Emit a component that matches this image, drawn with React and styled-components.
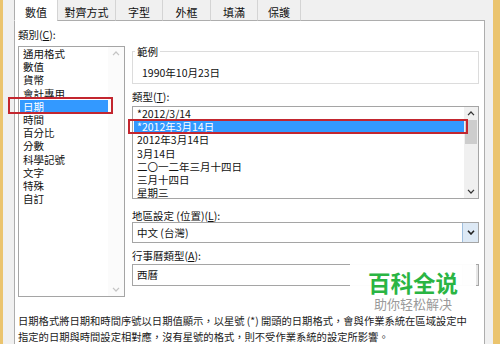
import React from "react";
import styled, { createGlobalStyle } from "styled-components";

const GlobalStyle = createGlobalStyle`
  html, body {
    margin: 0;
    padding: 0;
    background: #f0f0f0;
  }
`;

const categories = [
  "通用格式",
  "數值",
  "貨幣",
  "會計專用",
  "日期",
  "時間",
  "百分比",
  "分數",
  "科學記號",
  "文字",
  "特殊",
  "自訂",
];

const types = [
  "*2012/3/14",
  "*2012年3月14日",
  "2012年3月14日",
  "3月14日",
  "二〇一二年三月十四日",
  "三月十四日",
  "星期三",
];

const tabs = [
  { label: "數值", width: 44 },
  { label: "對齊方式", width: 59 },
  { label: "字型", width: 48 },
  { label: "外框", width: 49 },
  { label: "填滿", width: 48 },
  { label: "保護", width: 44 },
];

function Chevron({ up, color = "#555", stroke = 1.2 }) {
  return (
    <svg width="8" height="5" viewBox="0 0 8 5">
      <polyline
        points={up ? "1,4.2 4,1 7,4.2" : "1,0.8 4,4 7,0.8"}
        fill="none"
        stroke={color}
        strokeWidth={stroke}
      />
    </svg>
  );
}

function App() {
  return (
    <>
      <GlobalStyle />
      <Screen>
        <Strip $w={3} />
        <Dialog>
          <TabRow>
            {tabs.map((t, i) => (
              <Tab key={t.label} $w={t.width} $active={i === 0}>
                {t.label}
              </Tab>
            ))}
          </TabRow>
          <Panel>
            <Body>
              <Column>
                <Label>
                  類別(<u>C</u>):
                </Label>
                <CategoryList>
                  <Items>
                    {categories.map((c) => (
                      <Item key={c} $selected={c === "日期"}>
                        {c}
                        {c === "日期" && <RedMark $l={-12} $r={-5} $t={-3} $b={-1} />}
                      </Item>
                    ))}
                  </Items>
                  <ScrollBar $disabled>
                    <Chevron up color="#c4c4c4" />
                    <Track />
                    <Chevron color="#c4c4c4" />
                  </ScrollBar>
                </CategoryList>
              </Column>
              <Column>
                <GroupBox>
                  <legend>範例</legend>
                  <SampleValue>1990年10月23日</SampleValue>
                </GroupBox>
                <Label $mt={5.5}>
                  類型(<u>T</u>):
                </Label>
                <TypeList>
                  <Items>
                    {types.map((t, i) => (
                      <Item key={t} $selected={i === 1} $pl={3}>
                        {t}
                        {i === 1 && <RedMark $l={-6} $r={-4} $t={-1.5} $b={-1} />}
                      </Item>
                    ))}
                  </Items>
                  <ScrollBar>
                    <Chevron up color="#333" />
                    <Track>
                      <Thumb />
                    </Track>
                    <Chevron color="#333" />
                  </ScrollBar>
                </TypeList>
                <Label $mt={9.5}>
                  地區設定 (位置)(<u>L</u>):
                </Label>
                <Select $mt={0.5}>
                  <SelectText>中文 (台灣)</SelectText>
                  <DropButton>
                    <Chevron color="#222" stroke={1.6} />
                  </DropButton>
                </Select>
                <Label $mt={6}>
                  行事曆類型(<u>A</u>):
                </Label>
                <Select $mt={1.5} $h={22}>
                  <SelectText>西曆</SelectText>
                  <DropButton $plain />
                </Select>
              </Column>
            </Body>
            <Description>
              <span>日期格式將日期和時間序號以日期值顯示，以星號 (*) 開頭的日期格式，會與作業系統在區域設定中</span>
              <span>指定的日期與時間設定相對應，沒有星號的格式，則不受作業系統的設定所影響。</span>
            </Description>
            <Watermark>
              <strong>百科全说</strong>
              <small>助你轻松解决</small>
            </Watermark>
          </Panel>
        </Dialog>
        <Strip $w={7} />
      </Screen>
    </>
  );
}

const Screen = styled.div`
  width: 500px;
  height: 344px;
  display: flex;
  overflow: hidden;
  background: #f0f0f0;
  font-family: "Noto Sans CJK TC", "Noto Sans", sans-serif;
  font-size: 10.5px;
  color: #111;
`;

const Strip = styled.div`
  flex: none;
  width: ${(p) => p.$w}px;
  background: #ebc46e;
`;

const Dialog = styled.div`
  flex: 1;
  min-width: 0;
  display: flex;
  flex-direction: column;
  padding: 0 8px 0 11px;
`;

const TabRow = styled.div`
  display: flex;
  height: 21px;
  margin-bottom: -1px;
  position: relative;
  z-index: 1;
`;

const Tab = styled.div`
  width: ${(p) => p.$w}px;
  margin-left: ${(p) => (p.$active ? 0 : -1)}px;
  display: flex;
  align-items: center;
  justify-content: center;
  border: 1px solid ${(p) => (p.$active ? "#adadad" : "#d4d4d4")};
  border-top: none;
  border-bottom: ${(p) => (p.$active ? "1px solid #fff" : "1px solid #adadad")};
  background: ${(p) => (p.$active ? "#fff" : "#f0f0f0")};
  font-size: 11px;
  padding-top: 3px;
  box-sizing: border-box;
  &:first-child {
    margin-left: 0;
  }
`;

const Panel = styled.div`
  position: relative;
  flex: 1;
  background: #fff;
  border: 1px solid #adadad;
  border-bottom: none;
  padding: 7px 5px 0 3px;
`;

const Body = styled.div`
  display: grid;
  grid-template-columns: 107px 347px;
  column-gap: 7px;
  align-items: start;
`;

const Column = styled.div`
  display: flex;
  flex-direction: column;
`;

const Label = styled.div`
  line-height: 13px;
  height: 13px;
  margin-top: ${(p) => p.$mt || 0}px;
  white-space: nowrap;
  u {
    text-decoration: underline;
  }
`;

const ListBox = styled.div`
  display: flex;
  border: 1px solid #a5a5a5;
  background: #fff;
  box-sizing: border-box;
`;

const CategoryList = styled(ListBox)`
  margin-top: 5px;
  height: 251px;
`;

const TypeList = styled(ListBox)`
  margin-top: 3.5px;
  height: 93px;
`;

const Items = styled.div`
  flex: 1;
  min-width: 0;
  display: flex;
  flex-direction: column;
`;

const Item = styled.div`
  position: relative;
  height: 13.2px;
  line-height: 13.2px;
  padding-left: ${(p) => p.$pl ?? 3}px;
  margin-left: 1px;
  white-space: nowrap;
  background: ${(p) => (p.$selected ? "#3399ff" : "transparent")};
  color: ${(p) => (p.$selected ? "#fff" : "#111")};
`;

const RedMark = styled.div`
  position: absolute;
  left: ${(p) => p.$l}px;
  right: ${(p) => p.$r}px;
  top: ${(p) => p.$t}px;
  bottom: ${(p) => p.$b}px;
  border: 2px solid #c3262f;
  pointer-events: none;
`;

const ScrollBar = styled.div`
  flex: none;
  width: ${(p) => (p.$disabled ? 16 : 14)}px;
  display: flex;
  flex-direction: column;
  align-items: center;
  padding: 4px 0;
  gap: 3px;
  background: ${(p) => (p.$disabled ? "#fbfbfb" : "#f0f0f0")};
`;

const Track = styled.div`
  flex: 1;
  align-self: stretch;
  padding-top: 1px;
`;

const Thumb = styled.div`
  height: 24px;
  margin: 0 1px;
  background: #cdcdcd;
`;

const GroupBox = styled.fieldset`
  margin: 17px 0 0;
  padding: 8px 8px 4px;
  min-width: 0;
  border: 1px solid #dcdcdc;
  legend {
    padding: 0 2px;
    margin-left: -6px;
    line-height: 13px;
  }
`;

const SampleValue = styled.div`
  line-height: 13px;
  padding-left: 1px;
`;

const Select = styled.div`
  display: flex;
  height: ${(p) => p.$h || 21}px;
  margin-top: ${(p) => p.$mt || 0}px;
  border: 1px solid #a5a5a5;
  box-sizing: border-box;
  background: #fff;
`;

const SelectText = styled.div`
  flex: 1;
  display: flex;
  align-items: center;
  padding-left: 4px;
`;

const DropButton = styled.div`
  width: 15px;
  display: flex;
  align-items: center;
  justify-content: center;
  background: ${(p) => (p.$plain ? "#e6e6e6" : "#dde9f5")};
  border-left: 1px solid ${(p) => (p.$plain ? "#bdbdbd" : "#9fbfdf")};
`;

const Description = styled.div`
  display: flex;
  flex-direction: column;
  margin-top: 16px;
  font-size: 10.3px;
  line-height: 15.5px;
  white-space: nowrap;
  color: #1a1a1a;
`;

const Watermark = styled.div`
  position: absolute;
  left: 335px;
  top: 239px;
  width: 126px;
  height: 55px;
  background: rgba(255, 255, 255, 0.96);
  display: flex;
  flex-direction: column;
  align-items: center;
  justify-content: center;
  strong {
    font-family: "Noto Sans CJK SC", sans-serif;
    font-size: 22.5px;
    line-height: 24px;
    font-weight: 700;
    color: #2ab543;
    margin-top: 6px;
  }
  small {
    font-family: "Noto Sans CJK SC", sans-serif;
    font-size: 13px;
    line-height: 16px;
    color: #9a9a9a;
    margin-top: 2px;
  }
`;

export default App;
